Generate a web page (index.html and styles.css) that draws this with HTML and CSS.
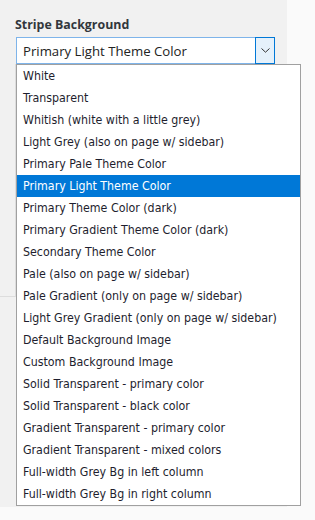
FILE: index.html
```html
<!DOCTYPE html>
<html lang="en">
<head>
    <meta charset="UTF-8">
    <meta name="viewport" content="width=device-width, initial-scale=1.0">
    <title>Stripe Background</title>
    <link rel="stylesheet" href="styles.css">
</head>
<body>
    <div class="panel">
        <div class="field-label">Stripe Background</div>
        <div class="select-wrap">
            <div class="select">
                <span class="select-value">Primary Light Theme Color</span>
                <span class="select-arrow">
                    <svg width="9" height="5" viewBox="0 0 9 5"><path d="M0.5 0.5 L4.5 4.2 L8.5 0.5" fill="none" stroke="#333" stroke-width="1"/></svg>
                </span>
            </div>
            <ul class="options">
                <li>White</li>
                <li>Transparent</li>
                <li>Whitish (white with a little grey)</li>
                <li>Light Grey (also on page w/ sidebar)</li>
                <li>Primary Pale Theme Color</li>
                <li class="selected">Primary Light Theme Color</li>
                <li>Primary Theme Color (dark)</li>
                <li>Primary Gradient Theme Color (dark)</li>
                <li>Secondary Theme Color</li>
                <li>Pale (also on page w/ sidebar)</li>
                <li>Pale Gradient (only on page w/ sidebar)</li>
                <li>Light Grey Gradient (only on page w/ sidebar)</li>
                <li>Default Background Image</li>
                <li>Custom Background Image</li>
                <li>Solid Transparent - primary color</li>
                <li>Solid Transparent - black color</li>
                <li>Gradient Transparent - primary color</li>
                <li>Gradient Transparent - mixed colors</li>
                <li>Full-width Grey Bg in left column</li>
                <li>Full-width Grey Bg in right column</li>
            </ul>
        </div>
        <div class="under-box"></div>
        <div class="divider"></div>
    </div>
</body>
</html>
```

FILE: styles.css
```css
body {
    margin: 0;
    padding: 0;
    background-color: #fafafa;
    font-family: "Open Sans", sans-serif;
}

.panel {
    width: 287px;
    height: 507px;
    background-color: #f1f1f1;
    padding: 16px 0 0 16px;
    box-sizing: border-box;
}

.field-label {
    font-size: 12.4px;
    font-weight: bold;
    color: #32373c;
    line-height: 18px;
    margin: 0 0 3px -1px;
}

.select-wrap {
    position: relative;
    width: 259px;
}

.select {
    display: flex;
    height: 27px;
    box-sizing: border-box;
    border: 1px solid #7eb4ea;
    background-color: #fff;
}

.select-value {
    flex: 1;
    padding-left: 6px;
    font-size: 13.2px;
    line-height: 26px;
    color: #222;
}

.select-arrow {
    width: 18px;
    margin: -1px -1px -1px 0;
    border: 1px solid #0078d7;
    background-color: #e5f1fb;
    display: flex;
    align-items: center;
    justify-content: center;
}

.options {
    position: absolute;
    top: 100%;
    left: 0;
    width: 285px;
    margin: 0;
    padding: 0;
    list-style: none;
    background-color: #fff;
    border: 1px solid #a0a0a0;
    box-sizing: border-box;
    font-family: "DejaVu Sans Condensed", "DejaVu Sans", sans-serif;
    font-size: 12.3px;
    color: #1e1e2e;
}

.options li {
    height: 22px;
    line-height: 23px;
    padding-left: 6px;
    white-space: nowrap;
}

.options li.selected {
    background-color: #0078d7;
    color: #fff;
}

.under-box {
    height: 232px;
    margin-left: -1px;
    border-left: 1px solid #dddddd;
}

.divider {
    height: 1px;
    margin-left: -16px;
    background-color: #dddddd;
}
```
